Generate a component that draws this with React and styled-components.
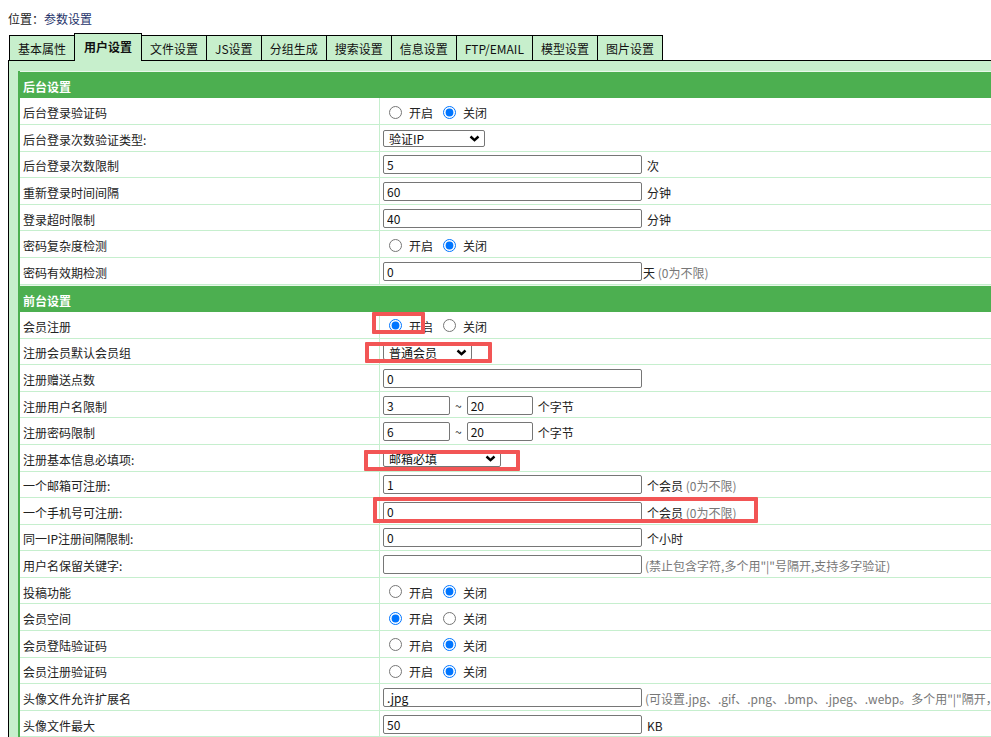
import React from 'react'
import styled, { createGlobalStyle } from 'styled-components'

const GlobalStyle = createGlobalStyle`
  html, body {
    margin: 0;
    padding: 0;
    background: #fff;
    overflow: hidden;
  }
  body {
    font-family: "Noto Sans CJK SC", "Noto Sans", "Liberation Sans", sans-serif;
    font-size: 12px;
    color: #222;
  }
`

const Page = styled.div`
  position: relative;
  width: 991px;
  height: 737px;
  overflow: hidden;
  padding: 11px 0 0 8px;
  box-sizing: border-box;
`

const Crumb = styled.div`
  height: 16px;
  line-height: 16px;
  margin-bottom: 6px;
  color: #222;
  span {
    color: #26336a;
  }
`

const TabBar = styled.div`
  display: flex;
  align-items: flex-end;
  height: 27px;
  padding-left: 1px;
  position: relative;
  z-index: 2;
`

const Tab = styled.div`
  box-sizing: border-box;
  height: ${p => (p.$active ? '28px' : '25px')};
  margin-bottom: ${p => (p.$active ? '-1px' : '0')};
  padding: ${p => (p.$active ? '0 9px 2px' : '1px 8px 0')};
  border: 1px solid #000;
  border-bottom: none;
  margin-right: -1px;
  background: #c7efcc;
  display: flex;
  align-items: center;
  font-weight: ${p => (p.$active ? 700 : 400)};
  color: #111;
  white-space: nowrap;
`

const Panel = styled.div`
  width: 1200px;
  border: 1px solid #000;
  background: #c7efcc;
  padding: 10px 0 0 9px;
  position: relative;
  z-index: 1;
`

const Table = styled.div`
  border-left: 2px solid #4caf50;
  background: #fff;
`

const SectionHead = styled.div`
  height: 27.4px;
  box-sizing: border-box;
  border-top: 1px solid #e8f8ea;
  background: #4caf50;
  color: #fff;
  font-weight: 700;
  padding: 3px 0 0 3px;
  display: flex;
  align-items: center;
`

const Row = styled.div`
  display: grid;
  grid-template-columns: 360px 1fr;
  height: 26.6px;
  box-sizing: border-box;
  border-bottom: 1px solid #c6efce;
`

const Label = styled.div`
  display: flex;
  align-items: center;
  padding: 3px 0 0 3px;
  border-right: 1px solid #c6efce;
  white-space: nowrap;
`

const Value = styled.div`
  display: flex;
  align-items: center;
  padding: 1px 0 0 3px;
  white-space: nowrap;
`

const TextInput = styled.input`
  box-sizing: border-box;
  width: ${p => p.$w || 259}px;
  height: 19px;
  border: 1px solid #767676;
  border-radius: 2px;
  padding: 0 3px;
  font: inherit;
  font-size: 12px;
  color: #111;
  background: #fff;
  outline: none;
`

const Unit = styled.span`
  margin-left: ${p => (p.$gap != null ? p.$gap : 5)}px;
  padding-top: 2px;
  color: #222;
`

const Hint = styled.span`
  color: #777;
`

const Tilde = styled.span`
  margin: 0 5px;
  color: #222;
`

const RadioGroup = styled.div`
  display: flex;
  align-items: center;
  padding-left: 1px;
`

const RadioLabel = styled.label`
  display: flex;
  align-items: center;
  margin-right: 5px;
  padding-top: 2px;
  input {
    width: 13px;
    height: 13px;
    margin: -1px 7px 0 5px;
    accent-color: #0075ff;
  }
`

const SelectBox = styled.div`
  box-sizing: border-box;
  width: ${p => p.$w}px;
  height: 17px;
  border: 1px solid #767676;
  border-radius: 2px;
  background: #fff;
  display: flex;
  align-items: center;
  padding: 1px 4px 0 5px;
  color: #111;
  svg {
    margin-left: auto;
  }
`

const Mark = styled.div`
  position: absolute;
  box-sizing: border-box;
  border: 4px solid #f25555;
  border-radius: 1px;
  pointer-events: none;
  z-index: 5;
`

const tabs = ['基本属性', '用户设置', '文件设置', 'JS设置', '分组生成', '搜索设置', '信息设置', 'FTP/EMAIL', '模型设置', '图片设置']

function Chevron() {
  return (
    <svg width="11" height="7" viewBox="0 0 11 7">
      <polyline points="1.5,1.5 5.5,5.2 9.5,1.5" fill="none" stroke="#000" strokeWidth="2.4" />
    </svg>
  )
}

function Radios({ name, on }) {
  return (
    <RadioGroup>
      <RadioLabel><input type="radio" name={name} defaultChecked={on} />开启</RadioLabel>
      <RadioLabel><input type="radio" name={name} defaultChecked={!on} />关闭</RadioLabel>
    </RadioGroup>
  )
}

function Select({ w, text }) {
  return (
    <SelectBox $w={w}>
      {text}
      <Chevron />
    </SelectBox>
  )
}

const backRows = [
  { label: '后台登录验证码', kind: 'radio', on: false },
  { label: '后台登录次数验证类型:', kind: 'select', w: 102, text: '验证IP' },
  { label: '后台登录次数限制', kind: 'text', value: '5', unit: '次' },
  { label: '重新登录时间间隔', kind: 'text', value: '60', unit: '分钟' },
  { label: '登录超时限制', kind: 'text', value: '40', unit: '分钟' },
  { label: '密码复杂度检测', kind: 'radio', on: false },
  { label: '密码有效期检测', kind: 'text', value: '0', unit: '天', gap: 1, hint: ' (0为不限)' },
]

const frontRows = [
  { label: '会员注册', kind: 'radio', on: true },
  { label: '注册会员默认会员组', kind: 'select', w: 89, text: '普通会员' },
  { label: '注册赠送点数', kind: 'text', value: '0' },
  { label: '注册用户名限制', kind: 'range', a: '3', b: '20', unit: '个字节' },
  { label: '注册密码限制', kind: 'range', a: '6', b: '20', unit: '个字节' },
  { label: '注册基本信息必填项:', kind: 'select', w: 118, text: '邮箱必填' },
  { label: '一个邮箱可注册:', kind: 'text', value: '1', unit: '个会员', hint: ' (0为不限)' },
  { label: '一个手机号可注册:', kind: 'text', value: '0', unit: '个会员', hint: ' (0为不限)' },
  { label: '同一IP注册间隔限制:', kind: 'text', value: '0', unit: '个小时' },
  { label: '用户名保留关键字:', kind: 'text', value: '', gap: 3, hint: '(禁止包含字符,多个用"|"号隔开,支持多字验证)' },
  { label: '投稿功能', kind: 'radio', on: false },
  { label: '会员空间', kind: 'radio', on: true },
  { label: '会员登陆验证码', kind: 'radio', on: false },
  { label: '会员注册验证码', kind: 'radio', on: false },
  { label: '头像文件允许扩展名', kind: 'text', value: '.jpg', gap: 3, hint: '(可设置.jpg、.gif、.png、.bmp、.jpeg、.webp。多个用"|"隔开，' },
  { label: '头像文件最大', kind: 'text', value: '50', unit: 'KB' },
]

function Field({ row, name }) {
  if (row.kind === 'radio') return <Radios name={name} on={row.on} />
  if (row.kind === 'select') return <Select w={row.w} text={row.text} />
  if (row.kind === 'range') {
    return (
      <>
        <TextInput $w={67} defaultValue={row.a} />
        <Tilde>~</Tilde>
        <TextInput $w={66} defaultValue={row.b} />
        <Unit>{row.unit}</Unit>
      </>
    )
  }
  return (
    <>
      <TextInput defaultValue={row.value} />
      {(row.unit || row.hint) && (
        <Unit $gap={row.gap}>
          {row.unit}
          {row.hint && <Hint>{row.hint}</Hint>}
        </Unit>
      )}
    </>
  )
}

function Section({ title, rows, prefix }) {
  return (
    <>
      <SectionHead>{title}</SectionHead>
      {rows.map((row, i) => (
        <Row key={i}>
          <Label>{row.label}</Label>
          <Value>
            <Field row={row} name={prefix + i} />
          </Value>
        </Row>
      ))}
    </>
  )
}

export default function App() {
  return (
    <>
      <GlobalStyle />
      <Page>
        <Crumb>位置：<span>参数设置</span></Crumb>
        <TabBar>
          {tabs.map(t => (
            <Tab key={t} $active={t === '用户设置'}>{t}</Tab>
          ))}
        </TabBar>
        <Panel>
          <Table>
            <Section title="后台设置" rows={backRows} prefix="b" />
            <Section title="前台设置" rows={frontRows} prefix="f" />
          </Table>
        </Panel>

        <Mark style={{ left: 372, top: 312, width: 53, height: 22 }} />
        <Mark style={{ left: 365, top: 342, width: 127, height: 21 }} />
        <Mark style={{ left: 364, top: 450, width: 156, height: 21 }} />
        <Mark style={{ left: 373, top: 497, width: 385, height: 26 }} />
      </Page>
    </>
  )
}
